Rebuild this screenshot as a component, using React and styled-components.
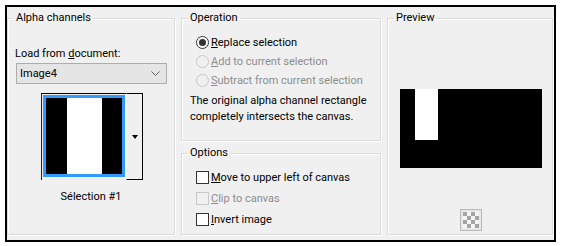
import React from 'react';
import styled, { createGlobalStyle } from 'styled-components';

const GlobalStyle = createGlobalStyle`
  html, body {
    margin: 0;
    padding: 0;
    background: #ffffff;
  }
  body {
    font-family: Roboto, "Liberation Sans", sans-serif;
    font-size: 11px;
    color: #000;
  }
`;

const Frame = styled.div`
  margin: 5px 0 0 5px;
  width: 547px;
  height: 229px;
  padding-top: 4px;
  border: 2px solid #000;
  background: #f0f0f0;
  box-sizing: content-box;
  display: grid;
  grid-template-columns: 168px 200px 166px;
  column-gap: 6px;
  align-items: start;
`;

const Column = styled.div`
  display: flex;
  flex-direction: column;
  gap: 5px;
`;

const Group = styled.fieldset`
  margin: 0;
  padding: 0;
  min-width: 0;
  box-sizing: border-box;
  height: ${({ $h }) => $h}px;
  border: 1px solid #dcdcdc;
  box-shadow: inset 1px 1px 0 #fff, 1px 1px 0 #fff;
  display: flex;
  flex-direction: column;
  align-items: ${({ $center }) => ($center ? 'center' : 'stretch')};
  & > legend {
    margin-left: 6px;
    padding: 0 2px;
    line-height: 14px;
  }
`;

const Label = styled.div`
  line-height: 15px;
  margin: 21px 0 0 7px;
  white-space: nowrap;
`;

const Select = styled.div`
  margin: 2px 0 0 8px;
  width: 151px;
  height: 21px;
  box-sizing: border-box;
  border: 1px solid #adadad;
  background: #e5e5e5;
  display: flex;
  align-items: center;
  justify-content: space-between;
  padding: 0 6px 0 3px;
  line-height: 15px;
`;

const Thumb = styled.div`
  align-self: center;
  margin-top: 9px;
  margin-left: 1px;
  display: flex;
  height: 87px;
`;

const ThumbCell = styled.div`
  border-top: 1px solid #000;
  border-left: 1px solid #1e1e1e;
  padding: 1px;
  & svg {
    display: block;
    border: 3px solid #3399ff;
  }
`;

const ThumbButton = styled.div`
  width: 17px;
  box-sizing: border-box;
  border-top: 1px solid #000;
  border-right: 1px solid #000;
  border-bottom: 1px solid #000;
  border-left: 1px solid #fafafa;
  background: #f0f0f0;
  display: flex;
  align-items: center;
  justify-content: center;
  &::after {
    content: '';
    border-left: 3.5px solid transparent;
    border-right: 3.5px solid transparent;
    border-top: 4px solid #000;
    margin-left: 1px;
  }
`;

const Caption = styled.div`
  align-self: center;
  margin-top: 9px;
  line-height: 15px;
`;

const List = styled.div`
  display: flex;
  flex-direction: column;
  padding: ${({ $top }) => $top}px 0 0 14px;
`;

const Row = styled.div`
  display: flex;
  align-items: center;
  height: ${({ $h }) => $h}px;
  white-space: nowrap;
  color: ${({ $disabled }) => ($disabled ? '#8d8d8d' : '#000')};
  & > span:last-child {
    margin-left: 2px;
  }
`;

const Radio = styled.span`
  width: 13px;
  height: 13px;
  box-sizing: border-box;
  border-radius: 50%;
  border: 1px solid ${({ $disabled }) => ($disabled ? '#c8c8c8' : '#333')};
  background: ${({ $disabled }) => ($disabled ? '#f0f0f0' : '#fff')};
  display: flex;
  align-items: center;
  justify-content: center;
  flex: none;
  &::after {
    content: '';
    width: 7px;
    height: 7px;
    border-radius: 50%;
    background: #333;
    display: ${({ $checked }) => ($checked ? 'block' : 'none')};
  }
`;

const Check = styled.span`
  width: 13px;
  height: 13px;
  box-sizing: border-box;
  border: 1px solid ${({ $disabled }) => ($disabled ? '#c8c8c8' : '#333')};
  background: ${({ $disabled }) => ($disabled ? '#f0f0f0' : '#fff')};
  flex: none;
`;

const Note = styled.p`
  margin: 3px 0 0 8px;
  line-height: 16px;
`;

const PreviewBox = styled.div`
  margin-top: 64px;
  margin-left: 1px;
  & svg {
    display: block;
  }
`;

const Transparency = styled.div`
  margin-top: 41px;
  margin-left: 1px;
  width: 22px;
  height: 22px;
  box-sizing: border-box;
  border: 1px solid #b8b8b8;
  background: #e8e8e8;
  display: flex;
  align-items: center;
  justify-content: center;
`;

export default function App() {
  return (
    <>
      <GlobalStyle />
      <Frame>
        <Group $h={224}>
          <legend>Alpha channels</legend>
          <Label>
            Load from <u>d</u>ocument:
          </Label>
          <Select>
            <span>Image4</span>
            <svg width="9" height="6" viewBox="0 0 9 6">
              <polyline points="0.5,0.5 4.5,4.5 8.5,0.5" fill="none" stroke="#606060" strokeWidth="1" />
            </svg>
          </Select>
          <Thumb>
            <ThumbCell>
              <svg width="76" height="76" viewBox="0 0 76 76">
                <rect width="76" height="76" fill="#000" />
                <rect x="21" width="35" height="76" fill="#fff" />
              </svg>
            </ThumbCell>
            <ThumbButton />
          </Thumb>
          <Caption>Sélection #1</Caption>
        </Group>

        <Column>
          <Group $h={130}>
            <legend>Operation</legend>
            <List $top={8}>
              <Row $h={19}>
                <Radio $checked />
                <span>
                  <u>R</u>eplace selection
                </span>
              </Row>
              <Row $h={19} $disabled>
                <Radio $disabled />
                <span>
                  <u>A</u>dd to current selection
                </span>
              </Row>
              <Row $h={19} $disabled>
                <Radio $disabled />
                <span>
                  <u>S</u>ubtract from current selection
                </span>
              </Row>
            </List>
            <Note>
              The original alpha channel rectangle
              <br />
              completely intersects the canvas.
            </Note>
          </Group>
          <Group $h={89}>
            <legend>Options</legend>
            <List $top={7}>
              <Row $h={21}>
                <Check />
                <span>
                  <u>M</u>ove to upper left of canvas
                </span>
              </Row>
              <Row $h={21} $disabled>
                <Check $disabled />
                <span>
                  <u>C</u>lip to canvas
                </span>
              </Row>
              <Row $h={21}>
                <Check />
                <span>
                  <u>I</u>nvert image
                </span>
              </Row>
            </List>
          </Group>
        </Column>

        <Group $h={224} $center>
          <legend>Preview</legend>
          <PreviewBox>
            <svg width="142" height="79" viewBox="0 0 142 79">
              <rect width="142" height="79" fill="#000" />
              <rect x="15" y="0" width="23" height="51" fill="#fff" />
            </svg>
          </PreviewBox>
          <Transparency>
            <svg width="16" height="16" viewBox="0 0 16 16">
              {[0, 1, 2, 3].map((r) =>
                [0, 1, 2, 3].map((c) => (
                  <rect
                    key={`${r}-${c}`}
                    x={c * 4}
                    y={r * 4}
                    width="4"
                    height="4"
                    fill={(r + c) % 2 ? '#f4f4f4' : '#a4a4a4'}
                  />
                ))
              )}
            </svg>
          </Transparency>
        </Group>
      </Frame>
    </>
  );
}
